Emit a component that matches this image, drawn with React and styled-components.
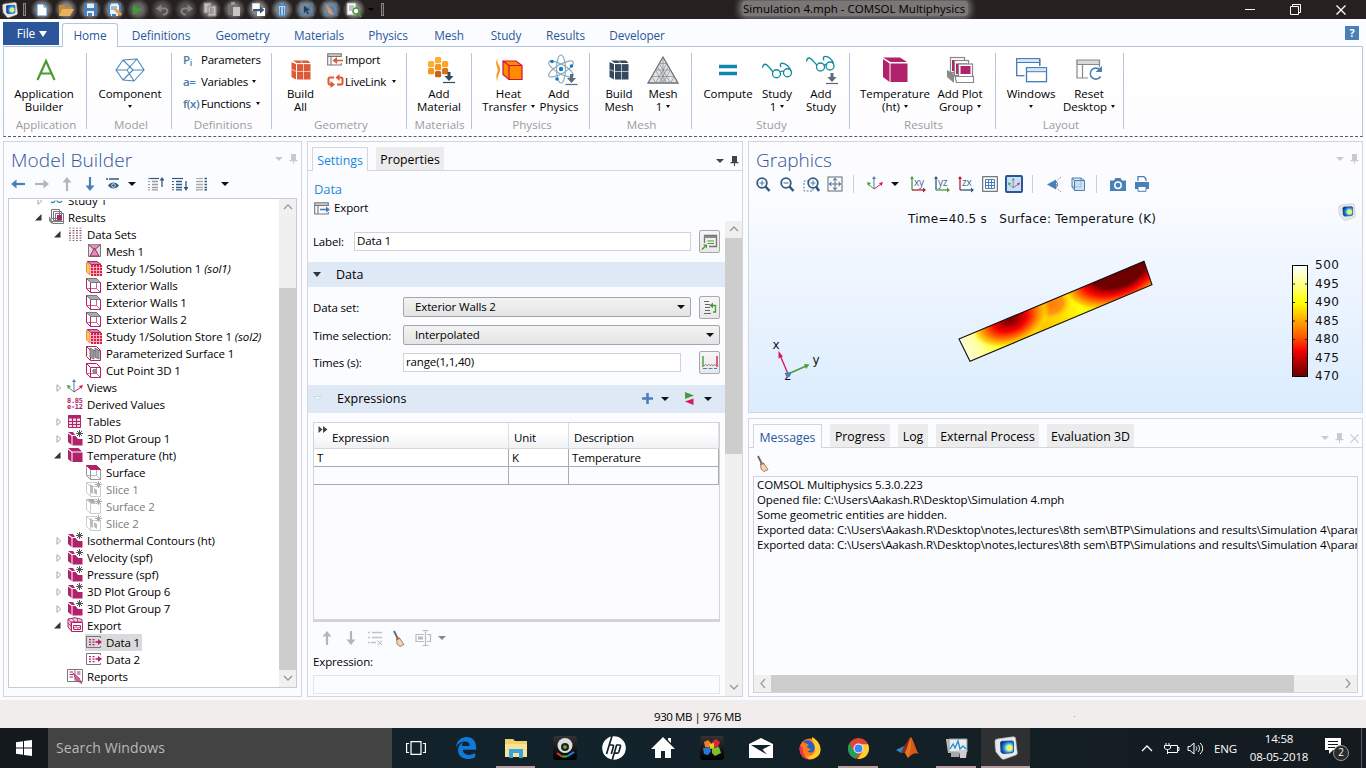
import React from "react";
import styled, { createGlobalStyle, css } from "styled-components";

const M = "#b0226a";
const B = "#4a80b8";
const N = "#34587f";
const GREEN = "#4a9a3a";

const GlobalStyle = createGlobalStyle`
  * { box-sizing: border-box; }
  html, body { margin: 0; padding: 0; overflow: hidden; }
  body { font-family: "Open Sans", "Noto Sans", sans-serif; font-size: 11.5px; letter-spacing: -0.14px; color: #000; }
  svg { display: block; flex: none; overflow: visible; }
`;

const Window = styled.div`
  width: 1366px; height: 768px; display: flex; flex-direction: column;
  background: #fbfcff; overflow: hidden; white-space: nowrap; cursor: default;
`;

/* ---------- small shared parts ---------- */
const Svg = ({ w = 16, h = w, vb, children, ...p }) => (
  <svg width={w} height={h} viewBox={vb || `0 0 ${w} ${h}`} fill="none" {...p}>{children}</svg>
);
const Caret = styled.span`
  flex: none; display: inline-block; width: 0; height: 0; vertical-align: middle;
  border-left: ${p => p.$s || 3}px solid transparent;
  border-right: ${p => p.$s || 3}px solid transparent;
  border-top: ${p => p.$h || p.$s || 3}px solid ${p => p.$c || "#111"};
  margin-left: ${p => p.$ml || 0}px;
`;
const Slot = styled.span`
  flex: none; width: ${p => p.$w || 24}px; display: flex; align-items: center; justify-content: center;
`;

/* ---------- title bar ---------- */
const TitleBar = styled.header`
  height: 19px; flex: none; background: #262120; display: flex; align-items: center; overflow: hidden;
`;
const QuickIcon = styled(Slot)`
  height: 19px;
  background: radial-gradient(circle, rgba(255,255,255,${p => p.$glow ?? 0.45}) 0 35%, rgba(255,255,255,0) 75%);
`;
const Grip = styled.span`width: 3px; height: 13px; border: 1px solid #8a8380; background: #3a3532; flex: none;`;
const WindowTitle = styled.div`
  width: 226px; margin-left: 354px; height: 15px; margin-top: -2px; padding-left: 1px; line-height: 15px; font-size: 11.5px; letter-spacing: 0.02px;
  color: #000; background: #7a7776; border-radius: 4px; box-shadow: 0 0 6px 3px #7a7776;
`;
const WindowButtons = styled.div`display: flex; margin-left: auto; padding-right: 2px; height: 17px;`;

/* ---------- ribbon ---------- */
const TabStrip = styled.nav`height: 27px; flex: none; display: flex; align-items: flex-end; padding-left: 3px; position: relative;`;
const FileTab = styled.div`
  width: 56px; height: 23px; background: #2b579a; color: #fff; display: flex; align-items: center; justify-content: center;
  align-self: flex-start; margin-top: 3px; font-size: 12px; padding-left: 2px;
`;
const RibbonTab = styled.div`
  width: ${p => p.$w}px; height: 24px; text-align: center; line-height: 26px; color: #2b579a; font-size: 11.8px; letter-spacing: -0.1px;
  ${p => p.$active && css`
    margin: 0 3px 0 3px; height: 24px; background: #fff; border: 1px solid #b5c6dc; border-bottom: 0; border-radius: 3px 3px 0 0;
    position: relative; top: 1px; z-index: 1; line-height: 23px;
  `}
`;
const HelpButton = styled.div`
  width: 14px; height: 14px; margin: 0 7px 6px auto; background: #4a80b8; color: #fff; font: bold 11px/14px "Open Sans", sans-serif; text-align: center;
`;
const Ribbon = styled.section`
  height: 91px; flex: none; margin: 0 3px; border: 1px solid #b5c6dc; border-bottom: 1px dashed #4c5c70;
  background: linear-gradient(#fff, #fdfdff); display: flex; padding-top: 6px;
`;
const Group = styled.div`
  width: ${p => p.$w}px; height: 76px; flex: none; border-right: 1px solid #b5c6dc; display: flex; flex-direction: column;
`;
const GroupItems = styled.div`display: flex; height: 63px; padding-left: ${p => p.$l}px;`;
const GroupLabel = styled.div`
  height: 13px; line-height: 17px; text-align: center; color: #9c9c9c; font-size: 11.6px; letter-spacing: 0;
  padding-left: ${p => p.$shift || 0}px;
`;
const BigButton = styled.div`
  width: ${p => p.$w}px; flex: none; display: flex; flex-direction: column; align-items: center; line-height: 13px; letter-spacing: -0.03px;
`;
const BigIcon = styled.div`height: 34px; display: flex; align-items: center; justify-content: center;`;
const Line = styled.div`height: 13px; display: flex; align-items: center; gap: ${p => p.$gap || 4}px;`;
const SmallList = styled.div`display: flex; flex-direction: column; margin-top: -5px; padding-left: ${p => p.$l || 0}px;`;
const SmallButton = styled.div`height: 22px; display: flex; align-items: center; letter-spacing: -0.25px;`;
const SmallGlyph = styled.span`
  width: ${p => p.$w || 19}px; color: #4a7aa8; font-weight: 600; font-size: 11.5px; letter-spacing: -0.4px;
  sub { font-size: 9px; line-height: 0; vertical-align: -2px; }
`;

const Big = ({ w, icon, a, b, caret }) => (
  <BigButton $w={w}>
    <BigIcon>{icon}</BigIcon>
    <Line>{a}</Line>
    <Line>{b && <span>{b}</span>}{caret && <Caret $s={2.5} $h={3} />}</Line>
  </BigButton>
);

/* ribbon drawings */
const CompIcon = () => (
  <Svg w={30} h={24} stroke="#4a86bd" strokeWidth="1.1">
    <path d="M1 12 8 2 22 1 29 12 19 23 8 22Z M1 12 12 12 19 23 M12 12 22 1 M8 2 18 12 29 12 M18 12 8 22" />
  </Svg>
);
const BlocksCube = ({ c }) => (
  <Svg w={22} h={22}>
    <path d="M3 1.500H18L20.500 4H6.500Z" fill={c} />
    <path d="M1.500 3 6 5V20.500L1.500 18Z" fill={c} />
    <path d="M7 5H20.500V20.500H7Z" fill={c} />
    <path d="M13.500 4.500V20.500 M10 1.500 13.500 4.500 M1.500 10.500 6.500 12.500H20.500 M1.500 2.500 6.500 4.700V20.500 M6.500 4.700H20.500" stroke="#fff" strokeWidth=".8" opacity=".8" />
  </Svg>
);
const Down = ({ x, y, c }) => (
  <g><path d={`M${x} ${y}v6`} stroke={c} strokeWidth="3" /><path d={`M${x - 4.500} ${y + 4}h9l-4.500 5z`} fill={c} /><path d={`M${x - 6} ${y + 10.500}h12`} stroke={c} strokeWidth="1.200" /></g>
);
const MaterialIcon = () => (
  <Svg w={26} h={30}>
    {[[5, 5, "#fbb034"], [12, 1, "#fbb034"], [19, 5, "#f9a825"], [5, 12, "#f7941e"], [12, 8, "#f7941e"], [19, 12, "#d9701a"], [12, 15, "#c8641a"]].map(([x, y, f], i) =>
      <rect key={i} x={x - 3} y={y + 1} width="6.200" height="6.200" rx="1.500" fill={f} />)}
    <Down x={23} y={17} c="#34495e" />
  </Svg>
);
const HeatIcon = () => (
  <Svg w={30} h={28}>
    <path d="M4 2C-1 8 6 12 3 17 2 20 2 23 4 26 2 20 7 17 6 12 5 8 2 7 4 2Z" fill="#f7941e" />
    <path d="M9 5 22 5 28 9.500V23.500H15L9 18.500Z" fill="#ff8c00" stroke="#d2103c" strokeWidth="1.200" />
    <path d="M9 5 15 9.500H28 M15 9.500V23.500" stroke="#d2103c" strokeWidth="1.200" />
  </Svg>
);
const AtomIcon = () => (
  <Svg w={30} h={32}>
    <g stroke="#8aaabd" strokeWidth="1.200">
      <ellipse cx="17" cy="15" rx="4.500" ry="14" />
      <ellipse cx="17" cy="15" rx="4.500" ry="14" transform="rotate(60 17 15)" />
      <ellipse cx="17" cy="15" rx="4.500" ry="14" transform="rotate(-60 17 15)" />
    </g>
    <g fill="#1478c8"><circle cx="17" cy="15" r="2.200" /><circle cx="8" cy="7.500" r="1.800" /><circle cx="27.500" cy="12" r="1.800" /><circle cx="13" cy="25" r="1.800" /></g>
    <Down x={27.5} y={20} c="#5b6b7b" />
  </Svg>
);
const TriMesh = () => (
  <Svg w={32} h={28}>
    <path d="M16 1 31 27H1Z" fill="#e2e2e2" stroke="#6a7079" strokeWidth="1.300" />
    <path d="M12.250 7.500H19.750 M8.500 14H23.500 M4.750 20.500H27.250 M12.250 7.500 23.500 27 M8.500 14 16 27 M4.750 20.500 8.500 27 M19.750 7.500 8.500 27 M23.500 14 16 27 M27.250 20.500 23.500 27 M16 1V27 M10.500 10.700 20 27 M21.500 10.700 12 27" stroke="#858a91" strokeWidth=".7" />
  </Svg>
);
const Glasses = ({ w = 30 }) => (
  <Svg w={w} h={w * 0.55} vb="0 0 30 16" stroke="#138a9c" strokeWidth="1.300">
    <circle cx="14.500" cy="11.500" r="4" /><circle cx="25.500" cy="10.500" r="4" />
    <path d="M18 10c1-1.500 3-1.500 4-.5 M11 9.500C8 7 6 2 3 2 1.500 2 .7 4 .5 5.500 M29 9C28 5 24 1 20 1c-2 0-2 2-1 4" />
  </Svg>
);
const AddStudyIcon = () => (
  <Svg w={30} h={31}>
    <g stroke="#138a9c" strokeWidth="1.300"><circle cx="14.500" cy="12" r="4" /><circle cx="24" cy="11" r="4" />
      <path d="M18 10.500c1-1.500 2-1.500 3-.5 M11 10C8 8 6 3 3 3 1.500 3 .7 5 .5 6.500 M27.500 9C27 5 22 1 19 1.500c-2 0-2 2-1 4" /></g>
    <Down x={26} y={18} c="#5b6b7b" />
  </Svg>
);
const TempCube = () => (
  <Svg w={28} h={28}>
    <path d="M2 1.500H19L26 6H9.500Z M2 3 8.500 7.500V26L2 21Z M9.500 7.500H26.500V26H9.500Z" fill={M} />
  </Svg>
);
const PlotStack = () => (
  <Svg w={28} h={28}>
    <path d="M1 14 8 18V27L1 21Z" fill="#8a8a8a" />
    <rect x="4.500" y="1.500" width="14" height="15" fill="#fff" stroke="#888" strokeWidth="1.200" />
    <path d="M6 4H17V6H8V15H6Z" fill={M} />
    <rect x="8.500" y="4.500" width="14" height="15" fill="#fff" stroke="#888" strokeWidth="1.200" />
    <path d="M10 7.500H21V9H12V18H10Z" fill={M} />
    <rect x="12.500" y="8" width="14" height="13" fill="#fff" stroke="#888" strokeWidth="1.200" />
    <path d="M14.500 10H24.500V18H14.500Z" fill={M} />
    <path d="M9 20.500H27.500V26.500H10.500Z" fill="#fff" stroke="#888" strokeWidth="1.200" />
  </Svg>
);
const WindowsIcon = () => (
  <Svg w={32} h={26}>
    <rect x="1.700" y="1.700" width="23" height="17" stroke="#3f7cba" strokeWidth="1.300" fill="#fff" />
    <path d="M9.500 8.500H28V24H9.500Z" fill="#fff" />
    <rect x="11.500" y="10.700" width="20" height="14" fill="#fff" stroke="#3f7cba" strokeWidth="1.300" />
    <path d="M24.700 2V9" stroke="#3f7cba" strokeWidth="1.300" />
    <path d="M2.500 2.500H24V5H2.500Z M12 11.500H31V14H12Z" fill="#dbe6f2" /><path d="M2 5.500H24.500 M11.500 14.700H32" stroke="#3f7cba" />
  </Svg>
);
const ResetIcon = () => (
  <Svg w={28} h={24}>
    <path d="M1 2H24V6H1Z" fill="#d9d9d9" /><path d="M13 20H2V2H24.500V9 M2 6.500H24.500 M7.500 6.500V20" stroke="#888" strokeWidth="1.200" />
    <path d="M25 12A5.500 5.500 0 1 0 25.500 18.500" stroke={B} strokeWidth="1.600" /><path d="M27 8V14H20.500Z" fill={B} />
  </Svg>
);
const ImportIcon = ({ exp }) => (
  <Svg w={16} h={13}>
    <path d="M1 1H14V3H1Z" fill="#c8c8c8" /><path d="M14.300 4V.7H.7V12H14.300V10 M.7 3.500H14.300 M4 3.500V12" stroke="#777" strokeWidth="1.100" />
    {exp ? <path d="M6 7.500H13" stroke={B} strokeWidth="1.600" /> : <path d="M9 7.500H16" stroke="#dd5a38" strokeWidth="1.600" />}
    {exp ? <path d="M12 4.500 16 7.500 12 10.500Z" fill={B} /> : <path d="M10 4 5.500 7.500 10 11Z" fill="#dd5a38" />}
  </Svg>
);
const LinkIcon = () => (
  <Svg w={17} h={12} stroke="#dd5a38" strokeWidth="2">
    <path d="M7 2.500H3Q1.500 2.500 1.500 4V8Q1.500 9.500 3 9.500H4 M10 9.500H14Q15.500 9.500 15.500 8V4Q15.500 2.500 14 2.500H11.500" />
    <path d="M3.500 6 8 9.500 3.500 13Z M12.500 -1V6L8.500 2.500Z" fill="#dd5a38" stroke="none" transform="translate(0 0)" />
  </Svg>
);

/* ---------- quick access drawings ---------- */
const Logo = ({ w = 18, id }) => (
  <Svg w={w} h={w} vb="0 0 24 24">
    <defs><radialGradient id={id} cx=".68" cy=".55" r=".75"><stop offset="0" stopColor="#fff04a" /><stop offset=".28" stopColor="#e8f080" /><stop offset=".45" stopColor="#38b8e8" /><stop offset=".75" stopColor="#1450b8" /><stop offset="1" stopColor="#0a2a78" /></radialGradient></defs>
    <path d="M1 5Q1 3.500 3 3L19 .8Q21 .6 21.500 2L23.300 17Q23.300 18.500 22 19L10 23.300Q8.500 23.500 7.500 22.500L2 16Q1 12 1 5Z" fill="#e8e8ea" stroke="#b8b8bc" strokeWidth=".6" />
    <path d="M6.500 7Q6.500 5.500 8 5.300L18 5Q19.500 5 19.500 6.500V15Q19.500 16.500 18 16.700L10 17.500Q8 17.500 7 16Z" fill={`url(#${id})`} stroke="#123a8a" strokeWidth=".8" />
  </Svg>
);
const Doc = () => <Svg w={12} h={14}><path d="M1 1H8L11 4V13H1Z" fill="#fff" stroke={B} /><path d="M8 1V4H11" stroke={B} /></Svg>;
const Folder = () => <Svg w={16} h={14}><path d="M1 13V2H6L8 4H13V6" fill="#c08a3a" /><path d="M4 6H16L12 13H1Z" fill="#e9b060" /></Svg>;
const Save = ({ pen }) => <Svg w={15} h={15}><path d="M1 1H14V14H1Z" fill={B} /><path d="M4 1.500H11V6H4Z M4 9H11V14H4Z" fill="#e8eef5" /><path d="M5 11h4v3H5z" fill={B} />{pen && <><path d="M3 3H12V12H3Z" fill="#eef3f8" /><path d="M4 5H10 M4 7H9" stroke={B} /><path d="M8 7 14 13" stroke="#e9a040" strokeWidth="3" /></>}</Svg>;
const Play = () => <Svg w={12} h={12}><path d="M1 1 11 6 1 11Z" fill="#3f9a3a" /></Svg>;
const Undo = ({ flip }) => <Svg w={13} h={12}><g transform={flip ? "translate(13 0) scale(-1 1)" : undefined}><path d="M4 4.500H9C13 5 12 11 7 10.500" stroke="#868280" strokeWidth="2" /><path d="M5.500 .5V8.500L0 4.500Z" fill="#868280" /></g></Svg>;
const Copy = () => <Svg w={14} h={15} stroke="#8b8784" fill="#c2bebb"><path d="M1 1H8V11H1Z M5 4H13V14H5Z" /><path d="M7 7H11 M7 9H11 M7 11H11" /></Svg>;
const Paste = () => <Svg w={14} h={15}><path d="M1 2H11V13H1Z" fill="#777371" /><path d="M4 0H8V3H4Z" fill="#999" /><path d="M6 5H13V14H6Z" fill="#c8c5c3" /></Svg>;
const Dup = () => <Svg w={15} h={15}><path d="M1 1H9V9H1Z M6 6H14V14H6Z" fill="#fff" /><path d="M1 1H9V9H1Z" stroke="#777" strokeWidth=".6" /><path d="M2 8H10" stroke={N} strokeWidth="2" /><path d="M9 4.500 13.500 8 9 11.500Z" fill={N} /></Svg>;
const Trash = () => <Svg w={12} h={15} stroke={B} strokeWidth="1.300"><path d="M1 3H11 M4 3V1H8V3 M2 4 2.500 14H9.500L10 4" fill="#c5d6e8" /><path d="M4.500 5V13 M7.500 5V13" /></Svg>;
const Sel = ({ brush }) => <Svg w={15} h={15}><rect x="1" y="1" width="13" height="13" stroke={B} strokeDasharray="2 1.500" fill="#6d87a4" fillOpacity=".4" /><rect x="4" y="4" width="8" height="8" fill={B} opacity=".7" />{brush ? <path d="M3 2 8 7 11 13 5 11Z" fill="#cf9a70" /> : <path d="M5 4 11 8 8 8.500 10 12 8.500 12.500 7 9 5 11Z" fill="#24384e" />}</Svg>;
const Find = () => <Svg w={16} h={16}><path d="M1 1H10V13H1Z" fill="#fff" stroke="#999" /><path d="M3 4H8 M3 6H8 M3 8H6" stroke="#888" /><circle cx="10" cy="9" r="3" stroke={GREEN} strokeWidth="1.600" fill="#fff" /><path d="M12 11 15 15" stroke={GREEN} strokeWidth="2" /></Svg>;

/* ---------- panels ---------- */
const Workspace = styled.main`
  flex: none; height: 563px; display: flex; gap: 5px; padding: 4px 3px 3px 3px;
`;
const Panel = styled.section`
  border: 1px solid #d3d5da; background: #fbfcff; display: flex; flex-direction: column; flex: none; overflow: hidden;
  width: ${p => p.$w}px; height: ${p => p.$h}px;
`;
const RightColumn = styled.div`display: flex; flex-direction: column; gap: 5px;`;
const PanelHead = styled.div`height: 32px; flex: none; display: flex; align-items: center; padding: 4px 3px 0 7px;`;
const PanelTitle = styled.h2`
  margin: 0; font-weight: 300; font-size: 19px; letter-spacing: ${p => p.$ls || 0}px; color: #2f5597; line-height: 26px; flex: 1;
`;
const HeadTools = styled.div`display: flex; align-items: center; gap: 6px; margin-top: -2px;`;
const Pin = ({ c }) => <Svg w={9} h={10}><path d="M2 0H7V6H8.500V7.300H5V10H4V7.300H.5V6H2Z" fill={c} /></Svg>;
const ScrollArrow = ({ dir }) => {
  const d = { up: "M1 6 5 2 9 6", down: "M1 2 5 6 9 2", left: "M6 0 2 4.500 6 9", right: "M2 0 6 4.500 2 9" }[dir];
  return <Svg w={dir === "left" || dir === "right" ? 8 : 10} h={dir === "left" || dir === "right" ? 9 : 8}><path d={d} stroke="#999" strokeWidth="1.300" /></Svg>;
};
const VBar = styled.div`
  width: 17px; flex: none; background: #f0f0f0; display: flex; flex-direction: column; align-items: center;
  > svg:first-child { margin: 4px 0 5px; }
  > svg:last-child { margin: auto 0 5px; }
`;
const VThumb = styled.div`width: 17px; background: #cdcdcd; margin-top: ${p => p.$t}px; height: ${p => p.$h}px;`;

/* ---------- model tree ---------- */
const TreeTools = styled.div`height: 22px; flex: none; display: flex; align-items: center; padding-left: 2px; margin-top: -1px;`;
const TreeBox = styled.div`
  width: 289px; height: 490px; margin: 3px 0 0 4px; border: 1px solid #c9cbd0; background: #fff; display: flex; overflow: hidden; padding-left: 0;
`;
const TreeClip = styled.div`flex: 1; overflow: hidden; margin-top: 1px;`;
const TreeList = styled.ul`list-style: none; margin: -8px 0 0; padding: 0;`;
const TreeRow = styled.li`
  height: 17px; display: flex; align-items: center; padding-left: ${p => 7 + p.$lvl * 19}px; color: ${p => p.$dim ? "#7d7d7d" : "#000"};
`;
const Twist = styled.span`width: 12px; height: 12px; padding-left: ${p => p.$kind === "c" ? 2 : 0}px; display: flex; flex: none; align-items: center;`;
const TreeLabel = styled.span`
  display: flex; align-items: center; height: 17px; gap: 4px; padding: 0 2px 0 1px; line-height: 16px;
  ${p => p.$sel && css`background: #dadadc;`}
  em { margin-left: 3px; }
`;

const Star = ({ c = "#555" }) => <path d="M12.500 0V7 M9 3.500H16 M10 1 15 6 M15 1 10 6" stroke={c} strokeWidth="1" />;
const wire = "M.5 1.500H10.500L14.500 5.500V15.500H4.500L.5 11.500Z M.5 1.500 4.500 5.500H14.500 M4.500 5.500V15.500";
const WireInner = ({ c }) => <path d="M10.500 5.500V11.500H4.500 M10.500 11.500 14.500 15.500 M.5 11.500H4.500" stroke={c} opacity=".7" />;
const treeIcons = {
  study: <path d="M2 11.500a3 3 0 1 1 5.500 0M9 11.500a3 3 0 1 1 5 0 M7 12a1.500 1 0 0 1 2.500 0 M3 14a3 3 0 0 0 4-1 M9 13a3 3 0 0 0 5 0" stroke="#138a9c" strokeWidth="1.300" transform="translate(0 -4)" />,
  results: <><path d="M1 7 4 11V15L1 12Z" fill="#888" /><g fill="#fff" stroke="#777"><path d="M3.500.5H11.500V9.500H3.500Z M5.500 2.500H13.500V11.500H5.500Z M7.500 4.500H15.500V12.500H7.500Z M4 12.500H15.500V14.500H4.800Z" /></g><path d="M9 6H14V11H9Z" fill={M} /></>,
  datasets: <g strokeDasharray="1.200 1.300" strokeWidth="1.800"><path d="M3 1.500V15 M6.500 1.500V5 M10 1.500V5 M13.500 1.500V5 M3 12V15" stroke="#9a9a9a" /><path d="M3 6.500V11 M6.500 4V15 M10 4V15 M13.500 4V15" stroke="#9d5b7c" /></g>,
  mesh: <><path d="M2.500 1.500H14.500V13.500H2.500Z" fill="#ddd" stroke="#777" /><path d="M2.500 1.500 8.500 7 14.500 1.500 M8.500 5 13 13H4Z" fill="#d893b4" stroke={M} /></>,
  sol: <><path d="M.5 2.500 4 5.500V15L.5 12Z" fill="#ffc27a" stroke="#f09020" /><path d="M1 1.500H11L15 4.500H5Z" fill="#c98aa8" stroke={M} /><path d="M5 5H16V16H5Z" fill="#d81b50" /><path d="M7.500 5V16 M10.500 5V16 M13.500 5V16 M5 7.500H16 M5 10.500H16 M5 13.500H16" stroke="#fbb" strokeWidth=".9" /></>,
  wall: <><WireInner c={M} /><path d={wire} stroke={M} /><path d="M.5 1.500H10.500L14.500 5.500H4.500Z" fill="#aaa" stroke="#777" /></>,
  param: <><path d={wire} stroke={M} /><path d="M4 3 8 5.500V14L4 12Z M9 3 13 5.500V14L9 12Z" fill="#999" stroke="#777" /></>,
  cut: <><WireInner c={M} /><path d={wire} stroke={M} /><circle cx="8.500" cy="9" r="1.800" fill="#999" stroke="#777" /></>,
  views: <><path d="M7 13V2" stroke={B} /><path d="M7 0 9 3H5Z" fill={B} /><path d="M7 13 1 8" stroke={GREEN} /><path d="M0 6 4 7 1 10Z" fill={GREEN} /><path d="M7 13 14 8" stroke="#d81b60" /><path d="M16 6 12 7 14.500 10Z" fill="#d81b60" /></>,
  derived: <g fill={M} fontFamily="DejaVu Sans Mono, monospace" fontWeight="bold" fontSize="7" letterSpacing="-.3"><text x="0" y="6.500">8.85</text><text x="0" y="13">e-12</text></g>,
  table: <><path d="M1.500 2.500H13.500V14.500H1.500Z" fill="#f3d6e4" stroke={M} /><path d="M1.500 2H13.500V5.500H1.500Z" fill={M} /><path d="M1.500 8.500H13.500 M1.500 11.500H13.500 M5.500 5V14.500 M9.500 5V14.500" stroke={M} /></>,
  cube: <path d="M1 1H11.500L15 4.500H5Z M1 2.500 4.500 5.500V15L1 12Z M5.500 5.500H15.500V15H5.500Z" fill={M} />,
  cubestar: <><path d="M1 2H6L8 5H5Z M1 3.500 4.500 6V15L1 12Z M5.500 6H8.500L11 9H15.500V15.500H5.500Z" fill={M} /><Star /></>,
  surface: <><WireInner c="#999" /><path d={wire} stroke="#999" /><path d="M.5 1.500H10.500L14.500 5.500H4.500Z" fill={M} stroke={M} /></>,
  slice: <><path d={wire} stroke="#ccc" /><path d="M4 3 7 5V13L4 11Z M8 7 11 9V14L8 12Z" fill="#bbb" /><Star c="#aaa" /></>,
  surface2: <><path d={wire} stroke="#ccc" /><path d="M1 1H8L9 5H5Z" fill="#aaa" /><Star c="#aaa" /></>,
  export: <><path d="M1 2 8 .7 15 2.500V5H4L4.500 14 1 10Z" fill="#f0cfdf" stroke={M} /><path d="M1 2 4 5 M5 1.300 8 5 M10 1.300 11 5 M1 6 4.500 9.500" stroke={M} strokeWidth=".8" /><path d="M4.500 5.500H15.500V14.500H4.500Z M6.500 8.500H13.500V12.500H6.500Z" fill="#fff" stroke={M} /><path d="M7 11.500 9 9.500 11 11.500 13 9.500" stroke={M} /></>,
  data: <><path d="M14.500 4V2.500H.5V13.500H14.500V12" stroke="#777" /><path d="M4 5V12 M7.500 5V12" stroke={M} strokeWidth="2" strokeDasharray="1.200 1.300" /><path d="M9.500 8H13" stroke={M} strokeWidth="1.600" /><path d="M12 5 16 8 12 11Z" fill={M} /></>,
  reports: <><path d="M.5 1.500H15.500V13.500H.5Z M8 1.500V13" stroke="#777" /><path d="M2.500 4H6 M2.500 6.500H6 M2.500 9H6 M10 4H13.500 M10 6H13.500" stroke={M} /><path d="M6 5 12 10 15 15.500 9.500 12.500Z" fill="#c86a98" stroke={M} strokeWidth=".7" /></>,
};
const tree = [
  [1, "c", "study", "Study 1"], [1, "o", "results", "Results"], [2, "o", "datasets", "Data Sets"],
  [3, "", "mesh", "Mesh 1"], [3, "", "sol", "Study 1/Solution 1", "(sol1)"], [3, "", "wall", "Exterior Walls"],
  [3, "", "wall", "Exterior Walls 1"], [3, "", "wall", "Exterior Walls 2"], [3, "", "sol", "Study 1/Solution Store 1", "(sol2)"],
  [3, "", "param", "Parameterized Surface 1"], [3, "", "cut", "Cut Point 3D 1"], [2, "c", "views", "Views"],
  [2, "", "derived", "Derived Values"], [2, "c", "table", "Tables"], [2, "c", "cubestar", "3D Plot Group 1"],
  [2, "o", "cube", "Temperature (ht)"], [3, "", "surface", "Surface"], [3, "", "slice", "Slice 1", null, true],
  [3, "", "surface2", "Surface 2", null, true], [3, "", "slice", "Slice 2", null, true], [2, "c", "cubestar", "Isothermal Contours (ht)"],
  [2, "c", "cubestar", "Velocity (spf)"], [2, "c", "cubestar", "Pressure (spf)"], [2, "c", "cubestar", "3D Plot Group 6"],
  [2, "c", "cubestar", "3D Plot Group 7"], [2, "o", "export", "Export"], [3, "", "data", "Data 1"], [3, "", "data", "Data 2"],
  [2, "", "reports", "Reports"],
];
const Arrow = ({ dir, c }) => {
  const r = { left: 0, up: 90, right: 180, down: 270 }[dir];
  return <Svg w={14} h={14}><g transform={`rotate(${r} 7 7)`}><path d="M3 7H14" stroke={c} strokeWidth="2.200" /><path d="M5.500 2.500V11.500L0 7Z" fill={c} /></g></Svg>;
};
const ListIcon = ({ a, kind }) => (
  <Svg w={17} h={14}>
    <path d={kind === "col" ? "M2 1.500H7" : "M0 1.500H11"} stroke={kind === "up" ? N : a} strokeWidth="1.200" />
    <path d="M0 1.500H2 M0 4.500H2 M0 7.500H2 M0 10.500H2 M0 12.800H2" stroke={a} />
    <path d={kind === "col" ? "M0 4.500H7 M0 7.500H7 M0 10.500H7 M0 12.800H7" : "M4 4.500H10 M4 7.500H10 M4 10.500H10 M4 12.800H10"} stroke={a} strokeWidth="1.300" />
    {kind === "up" && <><path d="M14 2V10" stroke={N} strokeWidth="1.300" /><path d="M14 0 16.500 3.500H11.500Z" fill={N} /></>}
    {kind === "down" && <><path d="M14 4V12" stroke={N} strokeWidth="1.300" /><path d="M14 14 16.500 10H11.500Z" fill={N} /></>}
    {kind === "col" && <path d="M8.500 1.500H11 M8.500 4.500H11 M8.500 7.500H11 M8.500 10.500H11 M8.500 12.800H11" stroke={N} strokeWidth="1.600" />}
  </Svg>
);

function ModelBuilder() {
  return (
    <Panel $w={299} $h={556}>
      <PanelHead>
        <PanelTitle $ls={0.15}>Model Builder</PanelTitle>
        <HeadTools><Caret $s={4} $c="#c5cad6" /><Pin c="#c5cad6" /></HeadTools>
      </PanelHead>
      <TreeTools>
        <Slot><Arrow dir="left" c={B} /></Slot><Slot><Arrow dir="right" c="#b5b5b5" /></Slot>
        <Slot $w={25}><Arrow dir="up" c="#b5b5b5" /></Slot><Slot $w={22}><Arrow dir="down" c={B} /></Slot>
        <Slot $w={24}><Svg w={14} h={12}><path d="M0 1H2 M3 1H13" stroke={N} strokeWidth="1.600" /><path d="M2 7.500C5 3.500 10 3.500 13 7.500 10 11.500 5 11.500 2 7.500Z" fill={N} /><circle cx="7.500" cy="7.500" r="1.800" stroke="#dce6f0" /></Svg></Slot>
        <Slot $w={13}><Caret $s={4} /></Slot>
        <Slot $w={36}><ListIcon a="#9a9a9a" kind="up" /></Slot>
        <Slot $w={12}><ListIcon a={N} kind="down" /></Slot>
        <Slot $w={37}><ListIcon a="#aaa" kind="col" /></Slot>
        <Slot $w={3}><Caret $s={4} /></Slot>
      </TreeTools>
      <TreeBox>
        <TreeClip>
          <TreeList>
            {tree.map(([lvl, tw, ic, label, tag, dim], i) => (
              <TreeRow key={i} $lvl={lvl} $dim={dim}>
                <Twist $kind={tw}>
                  {tw === "o" && <Svg w={7} h={7}><path d="M6.500 0V6.500H0Z" fill="#333" /></Svg>}
                  {tw === "c" && <Svg w={6} h={8}><path d="M1 .7 4.700 4 1 7.300Z" stroke="#a5a5a5" fill="#fff" /></Svg>}
                </Twist>
                <TreeLabel $sel={label === "Data 1"}>
                  <Svg w={16} h={17}>{treeIcons[ic]}</Svg>
                  <span>{label}{tag && <em>{tag}</em>}</span>
                </TreeLabel>
              </TreeRow>
            ))}
          </TreeList>
        </TreeClip>
        <VBar><ScrollArrow dir="up" /><VThumb $t={72} $h={382} /><ScrollArrow dir="down" /></VBar>
      </TreeBox>
    </Panel>
  );
}

/* ---------- settings ---------- */
const Tabs = styled.div`
  flex: none; height: 29px; display: flex; align-items: flex-end; border-bottom: 1px solid #d3d5da; padding-left: 4px; gap: 8px; font-size: 12.3px;
`;
const Tab = styled.div`
  width: ${p => p.$w}px; height: 23px; line-height: 25px; text-align: center; background: #ececec; letter-spacing: ${p => p.$ls || 0}px;
  ${p => p.$active && css`background: #fbfcff; color: ${p.$active}; border: 1px solid #d3d5da; border-bottom: 0; margin-bottom: -1px; height: 24px; line-height: 25px;`}
`;
const TabTools = styled(HeadTools)`margin: 0 3px 4px auto;`;
const SettingsHead = styled.div`height: 50px; flex: none; padding: 9px 0 0 6px;`;
const SettingsName = styled.div`color: #2b88d8; font-size: 13px; line-height: 18px;`;
const ExportRow = styled.div`display: flex; align-items: center; gap: 4px; height: 20px; line-height: 20px;`;
const SettingsBody = styled.div`display: flex; height: 475px; flex: none;`;
const Form = styled.div`width: 417px; overflow: hidden;`;
const Row = styled.div`display: flex; align-items: center; height: ${p => p.$h}px; padding: 0 5px;`;
const RowLabel = styled.label`width: ${p => p.$w}px; flex: none;`;
const Field = styled.div`
  width: ${p => p.$w}px; height: 19px; flex: none; background: ${p => p.$bg || "#fff"}; border: 1px solid ${p => p.$bc || "#d0d2d6"}; line-height: 16px; padding-left: 2px;
`;
const Combo = styled.div`
  width: ${p => p.$w}px; height: 20px; flex: none; border: 1px solid #a6a6a6; border-radius: 2px; background: linear-gradient(#f3f3f3, #e4e4e4);
  display: flex; align-items: center; justify-content: space-between; padding: 0 5px 1px 11px;
`;
const SquareButton = styled.div`
  width: 21px; height: 23px; flex: none; margin-left: auto; border: 1px solid #a9a9a9; border-radius: 2px; background: linear-gradient(#f6f6f6, #e8e8e8);
  display: flex; align-items: center; justify-content: center;
`;
const Section = styled.div`
  height: ${p => p.$h}px; margin-top: ${p => p.$mt || 0}px; background: #dfe8f5; display: flex; align-items: center; padding: 0 0 1px 5px; font-size: 12.5px; letter-spacing: 0;
`;
const SectionName = styled.span`margin-left: 15px; width: ${p => p.$w || 100}px;`;
const Grid = styled.div`
  margin: 9px 5px 0; width: 407px; height: 200px; border: 1px solid #d2d4d8; border-bottom: 3px solid #d2d4d8; background: #fcfcff;
`;
const GridHead = styled.div`
  display: grid; grid-template-columns: 195px 60px 150px; height: 26px; border-bottom: 1px solid #d6d8dc; background: linear-gradient(#fff 0 40%, #eff1f3); line-height: 29px;
`;
const HeadCell = styled.div`display: flex; gap: 4px; padding-left: ${p => p.$l}px; border-right: 1px solid #dcdee2;`;
const ExpandMark = styled(Slot)`width: 10px; height: 7px; margin-top: 3px;`;
const GridRow = styled.div`
  display: grid; grid-template-columns: 195px 60px 150px; height: 18px; line-height: 17px; background: ${p => p.$bg || "#fff"}; border-bottom: 1px solid #a9abae;
`;
const Cell = styled.div`padding-left: 3px; border-right: 1px solid #a9abae;`;
const GridTools = styled.div`height: 32px; display: flex; align-items: center; padding-left: 7px;`;
const Broom = () => (
  <Svg w={12} h={17}><path d="M1 1 5 9" stroke="#666" strokeWidth="1.800" /><path d="M3.500 8.500 6.500 8 11 14.500 7 16.500 4 14Z" fill="#f6d3b0" stroke="#8a6a4c" strokeWidth=".8" /><path d="M3.500 9.500 7 8.500" stroke="#c0492b" strokeWidth="1" /></Svg>
);

function Settings() {
  return (
    <Panel $w={436} $h={556}>
      <Tabs>
        <Tab $w={56} $active="#1a86dc">Settings</Tab><Tab $w={68}>Properties</Tab>
        <TabTools><Caret $s={4} $c="#444" /><Pin c="#444" /></TabTools>
      </Tabs>
      <SettingsHead>
        <SettingsName>Data</SettingsName>
        <ExportRow><ImportIcon exp />Export</ExportRow>
      </SettingsHead>
      <SettingsBody>
        <Form>
          <Row $h={41}>
            <RowLabel $w={41}>Label:</RowLabel><Field $w={337}>Data 1</Field>
            <SquareButton><Svg w={16} h={16}><path d="M2.500 9V1.500H14.500V12.500H7" stroke="#777" strokeWidth="1.300" /><path d="M2.500 3H14.500" stroke="#888" strokeWidth="2" /><path d="M5.500 7H12 M5.500 9.500H12" stroke={GREEN} /><path d="M0 15.500 3 12.500" stroke={GREEN} strokeWidth="1.500" /><path d="M1 10.500H5V14.500Z" fill={GREEN} /></Svg></SquareButton>
          </Row>
          <Section $h={25}><Caret $s={4.5} $h={5} $c="#333" /><SectionName>Data</SectionName></Section>
          <Row $h={40}>
            <RowLabel $w={90}>Data set:</RowLabel><Combo $w={288}>Exterior Walls 2<Caret $s={4} /></Combo>
            <SquareButton><Svg w={14} h={15}><path d="M1 1.500H6 M2 4.500H7 M2 7.500H7 M2 10.500H7 M1 13.500H8" stroke="#666" /><path d="M8 5.500H12.500V12H10" stroke={GREEN} strokeWidth="1.300" /><path d="M10 2.500V8.500L6.500 5.500Z" fill={GREEN} /></Svg></SquareButton>
          </Row>
          <Row $h={16}><RowLabel $w={90}>Time selection:</RowLabel><Combo $w={317}>Interpolated<Caret $s={4} /></Combo></Row>
          <Row $h={39}>
            <RowLabel $w={90}>Times (s):</RowLabel><Field $w={278}>range(1,1,40)</Field>
            <SquareButton><Svg w={16} h={15}><path d="M1 1V12" stroke={GREEN} strokeWidth="1.400" /><path d="M15 1V12" stroke="#d81b60" strokeWidth="1.400" /><path d="M2 11c1-2 2-2 3 0 1-2 2-2 3 0 1-2 2-2 3 0 1-2 2-2 3 0" stroke="#777" /><path d="M1 13.500H15" stroke={B} strokeWidth="1.200" strokeDasharray="4 1.500" /></Svg></SquareButton>
          </Row>
          <Section $h={28} $mt={3}>
            <Svg w={9} h={5}><path d="M1 .5H8L4.500 4Z" stroke="#b8dcf2" fill="#fff" /></Svg><SectionName $w={305}>Expressions</SectionName>
            <Svg w={11} h={11}><path d="M5.500 0V11 M0 5.500H11" stroke={B} strokeWidth="2.600" /></Svg>
            <Slot><Caret $s={4} /></Slot>
            <Slot><Svg w={10} h={13}><path d="M1 0 10 3.500 1 7Z" fill={GREEN} /><path d="M9.500 6.500V13L1 9.500Z" fill="#d81b60" /></Svg></Slot>
            <Slot $w={14}><Caret $s={4} /></Slot>
          </Section>
          <Grid>
            <GridHead>
              <HeadCell $l={4}><ExpandMark><Svg w={10} h={7}><path d="M.5 0 4.500 3.500 .5 7Z M5 0 9.500 3.500 5 7Z" fill="#444" /></Svg></ExpandMark>Expression</HeadCell>
              <HeadCell $l={5}>Unit</HeadCell><HeadCell $l={5}>Description</HeadCell>
            </GridHead>
            <GridRow><Cell>T</Cell><Cell>K</Cell><Cell>Temperature</Cell></GridRow>
            <GridRow $bg="#fbfcff"><Cell /><Cell /><Cell /></GridRow>
          </Grid>
          <GridTools>
            <Slot><Arrow dir="up" c="#b5b5b5" /></Slot><Slot><Arrow dir="down" c="#b5b5b5" /></Slot>
            <Slot><Svg w={15} h={14}><path d="M0 1.500H2 M4 1.500H14 M0 6.500H2 M4 6.500H14 M0 11.500H2 M3 11.500H8" stroke="#c2c2c2" strokeWidth="1.500" /><path d="M9.500 9.500 14 14 M14 9.500 9.500 14" stroke="#b5b5b5" /></Svg></Slot>
            <Slot><Broom /></Slot>
            <Slot><Svg w={17} h={16}><path d="M9 4.500H1V11.500H9 M12 4.500H15.500V11.500H12 M7.500 .5H13.500 M7.500 15.500H13.500 M10.500 1V15" stroke="#bbb" strokeWidth="1.200" /><path d="M3 6.500H8V9.500H3Z" fill="#bbb" /></Svg></Slot>
            <Slot $w={13}><Caret $s={4} $c="#888" /></Slot>
          </GridTools>
          <Row $h={15}>Expression:</Row>
          <Row $h={30}><Field $w={407} $bg="#fbfcff" $bc="#e3e5ea" /></Row>
        </Form>
        <VBar><ScrollArrow dir="up" /><VThumb $t={0} $h={216} /><ScrollArrow dir="down" /></VBar>
      </SettingsBody>
    </Panel>
  );
}

/* ---------- graphics ---------- */
const GraphicsPanel = styled(Panel)`background: linear-gradient(#fcfcff 0, #fbfcff 20%, #f1f7ff 42%, #dbecfe 100%);`;
const GraphTools = styled.div`height: 20px; margin-bottom: 1px; flex: none; display: flex; align-items: center; padding-left: 2px;`;
const Sep = styled.span`width: 1px; height: 18px; background: #ccd0d8; margin: 0 ${p => p.$r}px 0 ${p => p.$l}px; flex: none;`;
const Zoom = ({ sign, box }) => (
  <Svg w={15} h={15}>{box && <path d="M5 4H0V14H9V12" stroke={B} strokeDasharray="2 1.500" />}
    <circle cx={box ? 9 : 6} cy="6" r="4.800" stroke={N} strokeWidth="1.800" fill="#fff" />
    <path d={`M${box ? 12 : 9.500} 9.500 ${box ? 15 : 13.500} 14`} stroke={N} strokeWidth="2.600" />
    <path d={`M${box ? 6.500 : 3.500} 6h5${sign === "+" ? "m-2.500-2.500v5" : ""}`} stroke={B} strokeWidth="1.200" /></Svg>
);
const PlaneIcon = ({ t, v, h }) => (
  <Svg w={16} h={17}><path d="M2 1V14" stroke={v} strokeWidth="1.300" /><path d="M2 14H14" stroke={h} strokeWidth="1.300" /><path d="M2 0 4 3H0Z" fill={v} /><path d="M16 14 13 11.500V16.500Z" fill={h} />
    <text x="4" y="9.500" fontSize="10" letterSpacing="-.3" fill="#44688f" fontFamily="Open Sans, sans-serif">{t}</text></Svg>
);
const Toggle = styled.span`
  width: 18px; height: 18px; border: 2px solid #2c5596; border-radius: 2px; background: #c9dff5; display: flex; align-items: center; justify-content: center;
`;
const stops = ["#ffffff", "#ffffb0", "#ffff00", "#ffb000", "#ff5a00", "#f50000", "#a80000", "#6a0000"];
const ticks = [500, 495, 490, 485, 480, 475, 470];

const PlotText = styled.g`letter-spacing: 0;`;

function Graphics() {
  return (
    <GraphicsPanel $w={615} $h={272}>
      <PanelHead>
        <PanelTitle>Graphics</PanelTitle>
        <HeadTools><Caret $s={4} $c="#c5cad6" /><Pin c="#c5cad6" /></HeadTools>
      </PanelHead>
      <GraphTools>
        <Slot><Zoom sign="+" /></Slot><Slot><Zoom sign="-" /></Slot><Slot><Zoom sign="+" box /></Slot>
        <Slot $w={23}><Svg w={16} h={16}><rect x="1" y="1" width="14" height="14" stroke="#666" /><path d="M8 5V11 M5 8H11" stroke="#666" /><path d="M8 1.500 10.500 4.500H5.500Z M8 14.500 10.500 11.500H5.500Z M1.500 8 4.500 5.500V10.500Z M14.500 8 11.500 5.500V10.500Z" fill={B} /></Svg></Slot>
        <Sep $l={7} $r={8} />
        <Slot $w={27}><Svg w={17} h={16}>{treeIcons.views}</Svg></Slot><Slot $w={11}><Caret $s={4} /></Slot>
        <Slot $w={36}><PlaneIcon t="xy" v={GREEN} h="#b02030" /></Slot><Slot $w={12}><PlaneIcon t="yz" v={N} h={GREEN} /></Slot>
        <Slot $w={36}><PlaneIcon t="zx" v="#b02030" h={N} /></Slot>
        <Slot $w={12}><Svg w={16} h={16}><rect x=".7" y=".7" width="14.600" height="14.600" stroke="#555" /><path d="M3.500 3.500H12.500V12.500H3.500Z M6.500 3.500V12.500 M9.500 3.500V12.500 M3.500 6.500H12.500 M3.500 9.500H12.500" stroke={B} /></Svg></Slot>
        <Slot $w={36}><Toggle><Svg w={12} h={12} vb="0 0 16 16">{treeIcons.views}</Svg></Toggle></Slot>
        <Sep $l={0} $r={9} />
        <Slot><Svg w={15} h={15}><path d="M0 7.500 9 2.500V12.500Z" fill={B} /><path d="M14 0 9.500 4V11L14 15" stroke="#999" strokeDasharray="2 1" /><path d="M9 4.500a3.500 3.500 0 0 1 0 6" stroke={B} /></Svg></Slot>
        <Slot><Svg w={14} h={14}><path d="M1 1H10V10H1Z" stroke={B} fill="#dbe7f3" /><path d="M3.500 3.500H13.500V13.500H3.500Z" stroke={B} fill="#c4d6e8" fillOpacity=".7" /><path d="M1 1 3.500 3.500 M10 1 13.500 3.500 M1 10 3.500 13" stroke={B} /></Svg></Slot>
        <Sep $l={6} $r={9} />
        <Slot><Svg w={16} h={13}><path d="M0 2.500H4L5.500 0H10.500L12 2.500H16V13H0Z" fill={B} /><circle cx="8" cy="7.300" r="3.200" stroke="#fff" strokeWidth="1.500" /></Svg></Slot>
        <Slot><Svg w={14} h={16}><path d="M3 5V.7H9L11 3V5" stroke={B} strokeWidth="1.300" fill="#fff" /><path d="M0 6H14V13H0Z" fill={B} /><path d="M3 10.500H11V15.300H3Z" fill="#fff" stroke={B} /></Svg></Slot>
      </GraphTools>
      <svg width="613" height="217" viewBox="749 195 613 217" fontFamily="DejaVu Sans, sans-serif" fontSize="12" fill="#111">
        <defs>
          <linearGradient id="bar" x2="0" y2="1">{stops.map((c, i) => <stop key={c} offset={[0, .12, .34, .48, .64, .77, .89, 1][i]} stopColor={c} />)}</linearGradient>
          <linearGradient id="base"><stop offset="0" stopColor="#ffffe0" /><stop offset=".08" stopColor="#ffffa0" /><stop offset=".2" stopColor="#ffff10" /><stop offset=".4" stopColor="#ffc400" /><stop offset=".52" stopColor="#ffe400" /><stop offset=".6" stopColor="#ffff10" /><stop offset=".7" stopColor="#ffc800" /><stop offset="1" stopColor="#ffb400" /></linearGradient>
          <radialGradient id="hot"><stop offset="0" stopColor="#800000" /><stop offset=".18" stopColor="#a00000" /><stop offset=".42" stopColor="#f80000" /><stop offset=".68" stopColor="#ff7800" /><stop offset=".86" stopColor="#ffc800" stopOpacity=".8" /><stop offset="1" stopColor="#ffff00" stopOpacity="0" /></radialGradient>
          <radialGradient id="hotter"><stop offset="0" stopColor="#6a0000" /><stop offset=".47" stopColor="#700000" /><stop offset=".58" stopColor="#c80000" /><stop offset=".67" stopColor="#ff0800" /><stop offset=".82" stopColor="#ff7800" /><stop offset=".93" stopColor="#ffb800" stopOpacity=".8" /><stop offset="1" stopColor="#ffe800" stopOpacity="0" /></radialGradient>
          <radialGradient id="warm"><stop offset="0" stopColor="#ff7c08" /><stop offset=".55" stopColor="#ff9410" /><stop offset="1" stopColor="#ffe000" stopOpacity="0" /></radialGradient>
          <clipPath id="plate"><path d="M959 339 1144 261.300 1152 284.700 970 361.300Z" /></clipPath>
        </defs>
        <PlotText><text x="908" y="222.500" xmlSpace="preserve" textLength="248">{"Time=40.5 s   Surface: Temperature (K)"}</text></PlotText>
        <g clipPath="url(#plate)"><g transform="translate(959 339) rotate(-22.800)">
          <rect x="-2" y="-3" width="210" height="32" fill="url(#base)" />
          <ellipse cx="99" cy="4" rx="21" ry="16" fill="url(#warm)" />
          <ellipse cx="55" cy="2" rx="41" ry="26" fill="url(#hot)" />
          <ellipse cx="174" cy="-2" rx="59" ry="35" fill="url(#hotter)" />
        </g></g>
        <path d="M959 339 1144 261.300 1152 284.700 970 361.300Z" fill="none" stroke="#111" strokeWidth="1.100" />
        <rect x="1292.500" y="265.500" width="15" height="111" fill="url(#bar)" stroke="#000" />
        {ticks.map((t, i) => (
          <PlotText key={t}><path d={`M1293 ${265.500 + i * 18.500}h2 M1305 ${265.500 + i * 18.500}h2`} stroke="#222" /><text x="1315" y={269 + i * 18.500} textLength="24">{t}</text></PlotText>
        ))}
        <path d="M788 374 780 355" stroke="#d81b60" strokeWidth="1.400" /><path d="M778.500 351 783 356.500 778.500 358.500Z" fill="#d81b60" />
        <path d="M788 374 805 366.500" stroke={GREEN} strokeWidth="1.400" /><path d="M809.500 364.500 804 364 806 369Z" fill={GREEN} />
        <text x="784.500" y="380">z</text><circle cx="788" cy="374.500" r="2.500" fill={B} />
        <text x="772.500" y="348.500">x</text><text x="812.500" y="364">y</text>
        <g transform="translate(1338 203)"><Logo w={18} id="logoPlot" /></g>
      </svg>
    </GraphicsPanel>
  );
}

/* ---------- messages ---------- */
const MsgTools = styled.div`height: 28px; flex: none; padding: 7px 0 0 8px;`;
const MsgBox = styled.div`
  width: 605px; height: 217px; margin-left: 4px; border: 1px solid #d0d2d8; display: flex; flex-direction: column; overflow: hidden;
  font-size: 11.5px; letter-spacing: -0.11px;
`;
const MsgText = styled.div`flex: 1; padding: 0 0 0 3px; line-height: 15px; overflow: hidden;`;
const HBar = styled.div`
  height: 17px; flex: none; background: #f0f0f0; display: flex; align-items: center; justify-content: space-between; padding: 0 5px;
`;
const HThumb = styled.div`width: 523px; height: 17px; background: #cdcdcd; margin-right: auto; margin-left: 4px;`;
const CloseX = ({ c, w = 9 }) => <Svg w={w} h={w} vb="0 0 10 10"><path d="M.5.5 9.500 9.500 M9.500.5.5 9.500" stroke={c} strokeWidth="1.300" /></Svg>;
const messages = [
  "COMSOL Multiphysics 5.3.0.223",
  "Opened file: C:\\Users\\Aakash.R\\Desktop\\Simulation 4.mph",
  "Some geometric entities are hidden.",
  "Exported data: C:\\Users\\Aakash.R\\Desktop\\notes,lectures\\8th sem\\BTP\\Simulations and results\\Simulation 4\\param",
  "Exported data: C:\\Users\\Aakash.R\\Desktop\\notes,lectures\\8th sem\\BTP\\Simulations and results\\Simulation 4\\param",
];
function Messages() {
  return (
    <Panel $w={615} $h={279}>
      <Tabs>
        <Tab $w={69} $active="#2b579a">Messages</Tab><Tab $w={60}>Progress</Tab><Tab $w={30}>Log</Tab><Tab $w={103}>External Process</Tab><Tab $w={87}>Evaluation 3D</Tab>
        <TabTools><Caret $s={4} $c="#c5cad6" /><Pin c="#c5cad6" /><CloseX c="#c5cad6" /></TabTools>
      </Tabs>
      <MsgTools><Broom /></MsgTools>
      <MsgBox>
        <MsgText>{messages.map((m, i) => <div key={i}>{m}</div>)}</MsgText>
        <HBar><ScrollArrow dir="left" /><HThumb /><ScrollArrow dir="right" /></HBar>
      </MsgBox>
    </Panel>
  );
}

/* ---------- status and taskbar ---------- */
const StatusBar = styled.div`height: 28px; flex: none; background: #f1edec; line-height: 33px; padding-left: 654px; margin-top: auto; letter-spacing: -0.42px; display: flex;`;
const Speck = styled.i`width: 1px; height: 1px; background: #999; margin: 16px 0 0 333px;`;
const Taskbar = styled.footer`
  height: 40px; flex: none; background: linear-gradient(90deg, #12202a, #13232b 45%, #141a20); display: flex; color: #fff;
`;
const Start = styled.div`width: 48px; background: #13191c; display: flex; align-items: center; justify-content: center;`;
const Search = styled.div`width: 344px; background: #434343; color: #b9b9b9; font-size: 14px; line-height: 40px; padding-left: 8px; letter-spacing: 0.1px;`;
const Task = styled.div`
  width: ${p => p.$w || 49}px; display: flex; align-items: center; justify-content: center; position: relative;
  ${p => p.$active && css`background: #2f3032;`}
  ${p => p.$run && css`&::after { content: ""; position: absolute; left: ${p.$active ? 0 : 4}px; right: ${p.$active ? 0 : 5}px; bottom: 0; height: 2px; background: #b39c9c; }`}
`;
const Tray = styled.div`margin-left: auto; display: flex; align-items: center;`;
const Clock = styled.div`width: 70px; text-align: center; line-height: 18px; font-size: 11.5px; letter-spacing: -0.15px;`;
const Badge = styled.span`
  position: absolute; left: 8px; top: 7px; width: 16px; height: 16px; border: 1.500px solid #999; border-radius: 50%; background: #2b2b2b; font-size: 10px; line-height: 13px; text-align: center;
`;
const Notify = styled.div`width: 24px; height: 22px; position: relative; margin: 2px 0 0 11px;`;
const ShowDesktop = styled.div`width: 5px; height: 40px; border-left: 1px solid #555; margin-left: 12px;`;

const BlackTile = ({ id, children }) => (
  <Svg w={24} h={24}><defs><linearGradient id={id} x2="0" y2="1"><stop stopColor="#333" /><stop offset="1" stopColor="#000" /></linearGradient></defs><rect width="24" height="24" rx="3" fill={`url(#${id})`} />{children}</Svg>
);

export default function App() {
  return (
    <Window>
      <GlobalStyle />
      <TitleBar>
        <QuickIcon $w={19} $glow={0.15}><Logo w={16} id="logoTitle" /></QuickIcon>
        <Slot $w={11}><Grip /></Slot>
        {[[Doc], [Folder], [Save], [Save, { pen: true }], [Play, {}, .3], [Undo, {}, .22], [Undo, { flip: true }, .22], [Copy, {}, .35], [Paste, {}, .35], [Dup], [Trash], [Sel], [Sel, { brush: true }], [Find]].map(([C, p, g], i) =>
          <QuickIcon key={i} $glow={g}><C {...p} /></QuickIcon>)}
        <Slot $w={10}><Caret $s={3} $c="#000" /></Slot>
        <Slot $w={12}><Grip /></Slot>
        <WindowTitle>Simulation 4.mph - COMSOL Multiphysics</WindowTitle>
        <WindowButtons>
          <Slot $w={45}><Svg w={10} h={2}><path d="M0 .5H10" stroke="#fff" /></Svg></Slot>
          <Slot $w={46}><Svg w={11} h={11} stroke="#fff"><path d="M.5 2.500H8.500V10.500H.5Z M2.500 2.500V.5H10.500V8.500H8.500" /></Svg></Slot>
          <Slot $w={46}><CloseX c="#fff" w={10} /></Slot>
        </WindowButtons>
      </TitleBar>

      <TabStrip>
        <FileTab>File<Caret $s={4} $h={6} $c="#fff" $ml={4} /></FileTab>
        <RibbonTab $active $w={56}>Home</RibbonTab>
        <RibbonTab $w={80}>Definitions</RibbonTab><RibbonTab $w={83}>Geometry</RibbonTab><RibbonTab $w={70}>Materials</RibbonTab>
        <RibbonTab $w={68}>Physics</RibbonTab><RibbonTab $w={54}>Mesh</RibbonTab><RibbonTab $w={60}>Study</RibbonTab>
        <RibbonTab $w={59}>Results</RibbonTab><RibbonTab $w={84}>Developer</RibbonTab>
        <HelpButton>?</HelpButton>
      </TabStrip>

      <Ribbon>
        <Group $w={83}>
          <GroupItems $l={0}><Big w={80} a="Application" b="Builder" icon={<Svg w={22} h={22}><path d="M4.500 21 13 2 21.500 21 M7.500 14.500H18.500" stroke="#4a9a3a" strokeWidth="2.200" /></Svg>} /></GroupItems>
          <GroupLabel $shift={2}>Application</GroupLabel>
        </Group>
        <Group $w={85}><GroupItems $l={3}><Big w={80} a="Component" caret icon={<CompIcon />} /></GroupItems><GroupLabel $shift={4}>Model</GroupLabel></Group>
        <Group $w={100}>
          <GroupItems $l={11}><SmallList>
            <SmallButton><SmallGlyph $w={18}>P<sub>i</sub></SmallGlyph>Parameters</SmallButton>
            <SmallButton><SmallGlyph $w={18}>a=</SmallGlyph>Variables<Caret $s={2.5} $h={3} $ml={4} /></SmallButton>
            <SmallButton><SmallGlyph $w={18}>f(x)</SmallGlyph>Functions<Caret $s={2.5} $h={3} $ml={5} /></SmallButton>
          </SmallList></GroupItems>
          <GroupLabel $shift={3}>Definitions</GroupLabel>
        </Group>
        <Group $w={135}>
          <GroupItems $l={3}>
            <Big w={51} a="Build" b="All" icon={<BlocksCube c="#dd5a38" />} />
            <SmallList $l={1}>
              <SmallButton><SmallGlyph $w={18}><ImportIcon /></SmallGlyph>Import</SmallButton>
              <SmallButton><SmallGlyph $w={18}><LinkIcon /></SmallGlyph>LiveLink<Caret $s={2.5} $h={3} $ml={6} /></SmallButton>
            </SmallList>
          </GroupItems>
          <GroupLabel $shift={4}>Geometry</GroupLabel>
        </Group>
        <Group $w={65}><GroupItems $l={0}><Big w={64} a="Add" b="Material" icon={<MaterialIcon />} /></GroupItems><GroupLabel $shift={1}>Materials</GroupLabel></Group>
        <Group $w={118}><GroupItems $l={9}><Big w={55} a="Heat" b="Transfer" caret icon={<HeatIcon />} /><Big w={46} a="Add" b="Physics" icon={<AtomIcon />} /></GroupItems><GroupLabel $shift={3}>Physics</GroupLabel></Group>
        <Group $w={102}><GroupItems $l={7}><Big w={44} a="Build" b="Mesh" icon={<BlocksCube c="#34495e" />} /><Big w={44} a="Mesh" b="1" caret icon={<TriMesh />} /></GroupItems><GroupLabel $shift={2}>Mesh</GroupLabel></Group>
        <Group $w={158}>
          <GroupItems $l={9}>
            <Big w={54} a="Compute" icon={<Svg w={18} h={12}><path d="M0 2.500H18 M0 9.500H18" stroke="#0f87b0" strokeWidth="3.400" /></Svg>} />
            <Big w={44} a="Study" b="1" caret icon={<Glasses />} /><Big w={44} a="Add" b="Study" icon={<AddStudyIcon />} />
          </GroupItems><GroupLabel $shift={2}>Study</GroupLabel>
        </Group>
        <Group $w={146}><GroupItems $l={9}><Big w={72} a="Temperature" b="(ht)" caret icon={<TempCube />} /><Big w={58} a="Add Plot" b="Group" caret icon={<PlotStack />} /></GroupItems><GroupLabel $shift={2}>Results</GroupLabel></Group>
        <Group $w={128}><GroupItems $l={6}><Big w={58} a="Windows" caret icon={<WindowsIcon />} /><Big w={58} a="Reset" b="Desktop" caret icon={<ResetIcon />} /></GroupItems><GroupLabel $shift={3}>Layout</GroupLabel></Group>
      </Ribbon>

      <Workspace>
        <ModelBuilder />
        <Settings />
        <RightColumn><Graphics /><Messages /></RightColumn>
      </Workspace>

      <StatusBar>930 MB | 976 MB<Speck /></StatusBar>

      <Taskbar>
        <Start><Svg w={16} h={16}><path d="M0 2.200 7 1.200V7.600H0Z M8 1 16 0V7.600H8Z M0 8.500H7V14.800L0 13.800Z M8 8.500H16V16L8 15Z" fill="#fff" /></Svg></Start>
        <Search>Search Windows</Search>
        <Task $w={48}><Svg w={20} h={14} stroke="#fff" strokeWidth="1.200"><path d="M5 .6H15V13.400H5Z M3 2.500H.6V11.500H3 M17 2.500H19.400V11.500H17" /></Svg></Task>
        <Task $w={52}><Svg w={22} h={22} vb="0 0 24 24"><path d="M1 11C2 4 7 0 12.500 0 19 0 23 4.500 23 11V14H8.500c.3 3.500 3 5.500 6.500 5.500 2.500 0 5-1 7-2v4.500c-2 1.300-5 2-8 2C7.500 24 3 20 3.300 14 3.500 10 5.500 7.300 9 5.700 8 7 7.700 8.500 7.500 9.800H16C16 6.500 14 5 11 5 7 5 3.500 7 1 11Z" fill="#0f7ad8" /></Svg></Task>
        <Task $run $w={48}><Svg w={24} h={22}><path d="M1 2H9L11 4H23V20H1Z" fill="#f3d06a" /><path d="M1 7H23V20H1Z" fill="#fbe396" /><path d="M5 12H19V21H15V16H9V21H5Z" fill="#38a3e0" /></Svg></Task>
        <Task><BlackTile id="tileCam"><circle cx="12" cy="9.500" r="7.500" fill="#ddd" /><circle cx="12" cy="11" r="4" fill="#222" /><circle cx="12" cy="11" r="1.800" fill="#5c2" /><path d="M4 17 9 20.500" stroke="#e33" strokeWidth="2" /><path d="M9 20.500H14" stroke="#3b3" strokeWidth="2" /><path d="M14 20.500 21 16" stroke="#28d" strokeWidth="2" /></BlackTile></Task>
        <Task><Svg w={24} h={24}><circle cx="12" cy="12" r="11.800" fill="#fff" /><path d="M10 0 4.500 18 M8 9H10.500Q11.800 9 11.400 10.500L9.300 18 M14.800 8.500 10.200 24 M14.500 9H17.500Q18.800 9 18.400 10.500L16.800 16Q16.400 17.200 15.200 17.200H12.200" stroke="#13232b" strokeWidth="1.700" /></Svg></Task>
        <Task><Svg w={24} h={22}><path d="M12 0 24 12H20V21H14V14H10V21H4V12H0Z M17 1H20V6L17 3Z" fill="#fff" /></Svg></Task>
        <Task><BlackTile id="tilePuzzle"><path d="M4 6 8 4 11 7 9 11 5 11Z" fill="#f08020" /><path d="M12 6 16 3 20 6 18 11 13 11Z" fill="#d82838" /><path d="M3 12 9 11 11 15 8 19 4 18Z" fill="#2878d8" /><path d="M12 12 19 11 21 17 15 20 12 17Z" fill="#78c030" /><path d="M9 8 14 7 14 12 10 13Z" fill="#f0c820" /></BlackTile></Task>
        <Task><Svg w={24} h={20}><path d="M12 0 24 6V20H0V6Z" fill="#fff" /><path d="M2 7H22L13.500 11.500 18 16.500 10 12Z" fill="#13232b" /></Svg></Task>
        <Task><Svg w={24} h={24}><circle cx="12" cy="13" r="10.500" fill="#ff7a14" /><path d="M14 1C20 4 24 11 22 17 19 24 8 25 4 20 11 22 18 19 17 12 17 8 14 6 14 1Z" fill="#ffce2e" /><path d="M2 9C0 18 6 24 13 23.500 7 22 4 17 5 12Z" fill="#f0324a" /><path d="M5 6C9 2 15 5 16.500 10 17.500 16 13 18 9.500 15.500L13 13.500 8.500 11 11 9Z" fill="#2060c8" /></Svg></Task>
        <Task $run><Svg w={23} h={23} vb="0 0 24 24"><circle cx="12" cy="12" r="11" fill="#e04434" /><path d="M2.500 6.500 8 16 12 17 9 22.600A11 11 0 0 1 2.500 6.500Z" fill="#1fa05a" /><path d="M22 7.500A11 11 0 0 1 11 23L17 14 15 7.500Z" fill="#fbd02e" /><circle cx="12" cy="12" r="5.200" fill="#fff" /><circle cx="12" cy="12" r="4.200" fill="#4285f4" /></Svg></Task>
        <Task><Svg w={24} h={22}><path d="M0 13 8 9 10 13 5 16Z" fill="#2c8ac8" /><path d="M8 9C11 7 12 1 15 0L10 16 5 16Z" fill="#8c2d19" /><path d="M15 0C18 4 20 14 23 17 19 15 16 17 12 21L9 16C12 12 12 4 15 0Z" fill="#d85a18" /><path d="M15 0 15 11 12 21 9 16Z" fill="#f08a2a" opacity=".6" /></Svg></Task>
        <Task $run><Svg w={24} h={24}><path d="M1 3H19L20 17H3Z" fill="#bfc3c7" /><path d="M4 3H22V16H4Z" fill="#e6ecf0" stroke="#999" /><path d="M5 13 8 8 10 12 13 5 15 13 18 10 21 13" stroke="#2888c8" strokeWidth="1.300" /><path d="M6 16H14V21H6Z" fill="#a8a8a8" /><path d="M14 14H22L21 22H15Z" fill="#cfcfcf" /></Svg></Task>
        <Task $run $active><Logo w={24} id="logoTask" /></Task>
        <Tray>
          <Slot><Svg w={12} h={8}><path d="M1 7 6 2 11 7" stroke="#fff" strokeWidth="1.300" /></Svg></Slot>
          <Slot><Svg w={17} h={13} stroke="#fff"><path d="M8 3.500H14.500V10.500H4 M14.500 5.500H16V8.500H14.500 M3 1V3 M6 1V3 M1.500 3.500H7.500V6C7 8 2 8 1.500 6Z M4.500 8V12" /></Svg></Slot>
          <Slot><Svg w={17} h={13} stroke="#fff"><path d="M1 4.500H3L7 1V12L3 8.500H1Z M9 4.500c1 1 1 3 0 4 M11 3c2 2 2 5 0 7 M13 1c3.500 3 3.500 8 0 11" /></Svg></Slot>
          <Slot $w={37}>ENG</Slot>
          <Clock><div>14:58</div><div>08-05-2018</div></Clock>
          <Notify><Svg w={16} h={17}><path d="M0 0H16V12H8L4 16V12H0Z" fill="#fff" /><path d="M3 3.500H13 M3 6.500H13 M3 9.500H10" stroke="#141a20" /></Svg><Badge>2</Badge></Notify>
          <ShowDesktop />
        </Tray>
      </Taskbar>
    </Window>
  );
}
